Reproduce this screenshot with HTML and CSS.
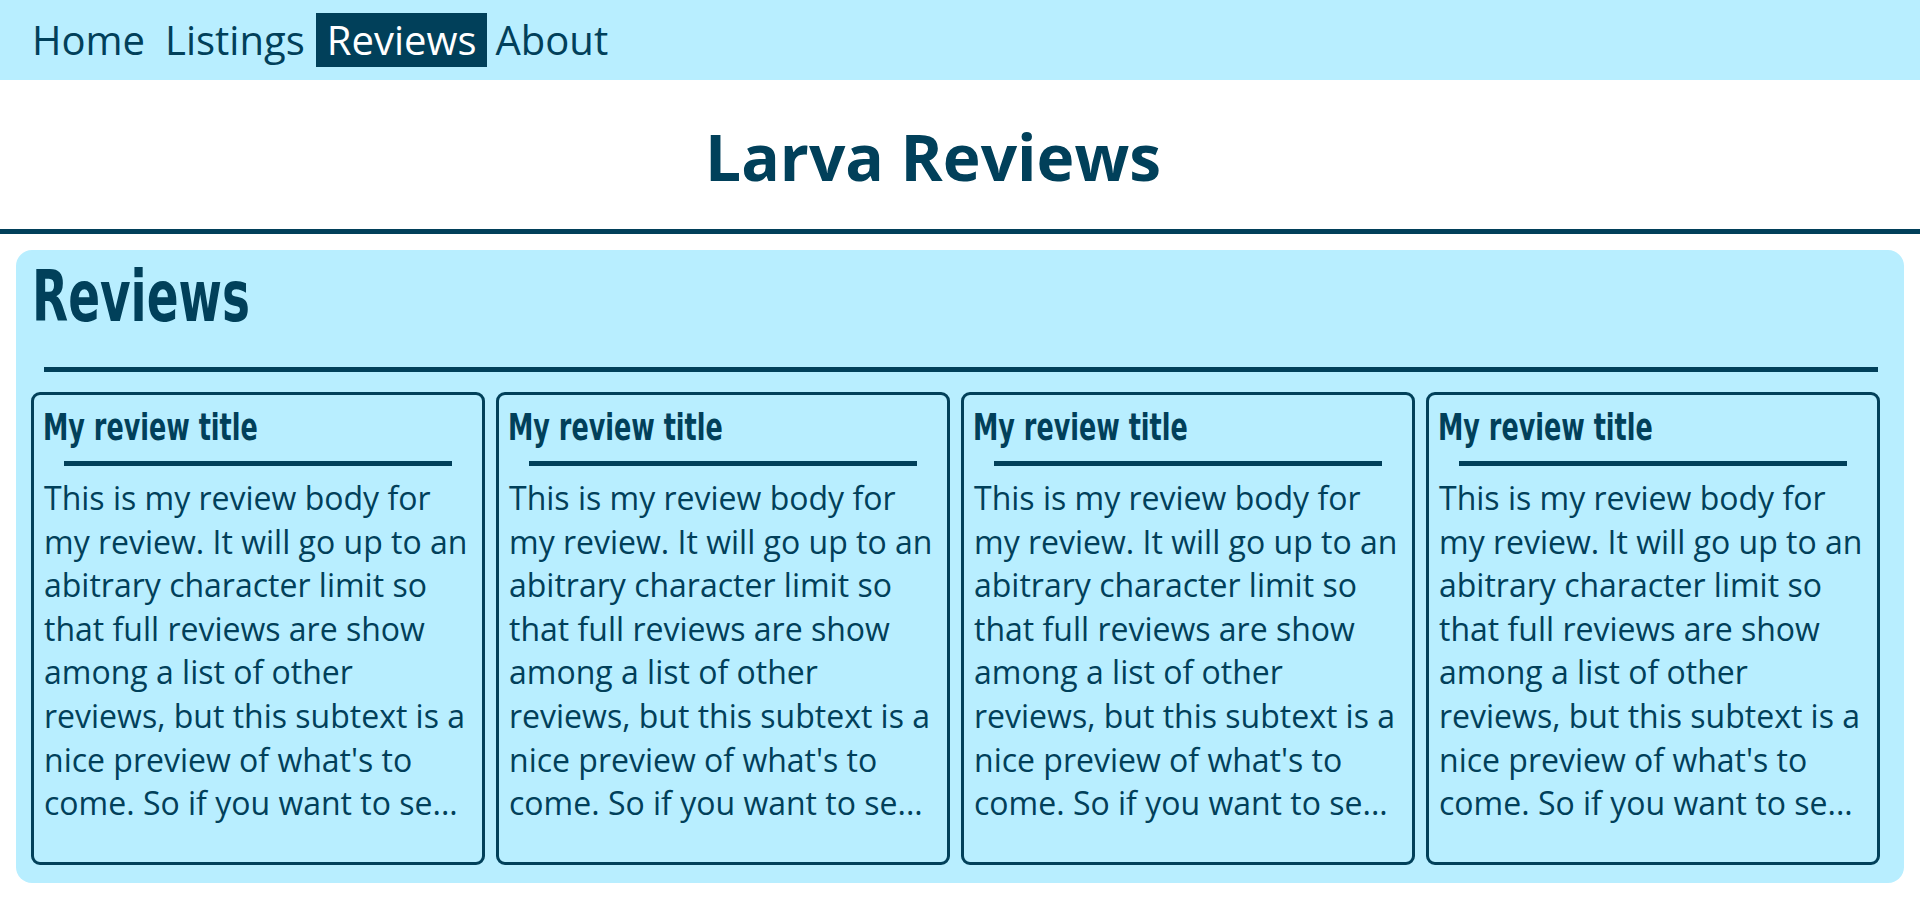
FILE: index.html
```html
<!DOCTYPE html>
<html lang="en">
<head>
<meta charset="utf-8">
<title>Larva Reviews</title>
<link rel="stylesheet" href="styles.css">
</head>
<body>
<nav class="nav">
  <a class="nav-link nav-home" href="#">Home</a>
  <a class="nav-link nav-listings" href="#">Listings</a>
  <a class="nav-link active" href="#">Reviews</a>
  <a class="nav-link" href="#">About</a>
</nav>
<header class="site-header">
  <h1 class="site-title">Larva Reviews</h1>
</header>
<main class="panel">
  <h2 class="panel-title"><span class="condensed">Reviews</span></h2>
  <hr class="panel-rule">
  <section class="cards">
    <article class="card">
      <h3 class="card-title"><span class="condensed">My review title</span></h3>
      <hr class="card-rule">
      <p class="card-body">This is my review body for my review. It will go up to an abitrary character limit so that full reviews are show among a list of other reviews, but this subtext is a nice preview of what's to come. So if you want to se...</p>
    </article>
    <article class="card">
      <h3 class="card-title"><span class="condensed">My review title</span></h3>
      <hr class="card-rule">
      <p class="card-body">This is my review body for my review. It will go up to an abitrary character limit so that full reviews are show among a list of other reviews, but this subtext is a nice preview of what's to come. So if you want to se...</p>
    </article>
    <article class="card">
      <h3 class="card-title"><span class="condensed">My review title</span></h3>
      <hr class="card-rule">
      <p class="card-body">This is my review body for my review. It will go up to an abitrary character limit so that full reviews are show among a list of other reviews, but this subtext is a nice preview of what's to come. So if you want to se...</p>
    </article>
    <article class="card">
      <h3 class="card-title"><span class="condensed">My review title</span></h3>
      <hr class="card-rule">
      <p class="card-body">This is my review body for my review. It will go up to an abitrary character limit so that full reviews are show among a list of other reviews, but this subtext is a nice preview of what's to come. So if you want to se...</p>
    </article>
  </section>
</main>
</body>
</html>
```
FILE: styles.css
```css
* { box-sizing: border-box; }

body {
  margin: 0;
  font-family: "Open Sans", "Noto Sans", sans-serif;
  color: #01405a;
  background: #ffffff;
}

.nav {
  display: flex;
  align-items: center;
  background: #b8eeff;
  padding: 13px 32px;
  height: 80px;
  white-space: nowrap;
}

.nav-link {
  display: block;
  font-size: 40px;
  line-height: 54px;
  color: #01405a;
  text-decoration: none;
  margin-right: 9px;
}

.nav-home {
  margin-right: 20px;
}

.nav-listings {
  margin-right: 11px;
}

.nav-link.active {
  background: #01405a;
  color: #ffffff;
  padding: 0 10px 0 11px;
}

.site-header {
  border-bottom: 5px solid #01405a;
  padding-right: 54px;
}

.site-title {
  margin: 0;
  padding: 33px 0 29px;
  text-align: center;
  font-size: 64px;
  font-weight: 700;
  line-height: 87px;
}

.condensed {
  display: inline-block;
  transform-origin: left center;
  white-space: nowrap;
}

.panel {
  margin: 16px;
  background: #b8eeff;
  border-radius: 16px;
  padding: 7px 0 18px;
}

.panel-title {
  margin: 0 0 0 16px;
  font-family: "DejaVu Sans Condensed", "DejaVu Sans", sans-serif;
  font-weight: 700;
  font-size: 71px;
  line-height: 80px;
}

.panel-title .condensed {
  transform: scaleX(0.735);
}

.panel-rule {
  margin: 30px 26px 20px 28px;
  border: 0;
  height: 5px;
  background: #01405a;
}

.cards {
  display: grid;
  grid-template-columns: repeat(4, 1fr);
  gap: 11px;
  padding: 0 24px 0 15px;
}

.card {
  border: 3px solid #01405a;
  border-radius: 9px;
  padding: 0 12px 37px 10px;
}

.card-title {
  margin: 11px 0 0 -1px;
  font-family: "DejaVu Sans Condensed", "DejaVu Sans", sans-serif;
  font-weight: 700;
  font-size: 38px;
  line-height: 42px;
}

.card-title .condensed {
  transform: scaleX(0.745);
}

.card-rule {
  margin: 13px 18px 10px 20px;
  border: 0;
  height: 5px;
  background: #01405a;
}

.card-body {
  margin: 0;
  font-size: 32px;
  line-height: 43.6px;
}
```
